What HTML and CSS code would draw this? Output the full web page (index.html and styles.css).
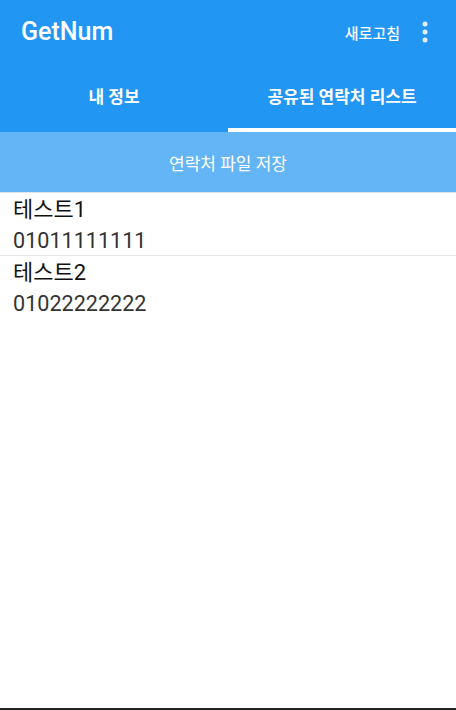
FILE: index.html
```html
<!DOCTYPE html>
<html lang="ko">
<head>
<meta charset="utf-8">
<title>GetNum</title>
<link rel="stylesheet" href="styles.css">
</head>
<body>
<div class="app">
  <header class="appbar">
    <div class="toolbar">
      <div class="title">GetNum</div>
      <div class="actions">
        <span class="action">새로고침</span>
        <svg class="more" width="6" height="22" viewBox="0 0 6 22"><circle cx="3" cy="3" r="2.5" fill="#e3effc"/><circle cx="3" cy="11" r="2.5" fill="#e3effc"/><circle cx="3" cy="19" r="2.5" fill="#e3effc"/></svg>
      </div>
    </div>
    <nav class="tabs">
      <div class="tab">내 정보</div>
      <div class="tab active">공유된 연락처 리스트</div>
    </nav>
  </header>
  <button class="save">연락처 파일 저장</button>
  <ul class="list">
    <li class="item"><div class="name">테스트1</div><div class="phone">01011111111</div></li>
    <li class="item"><div class="name">테스트2</div><div class="phone">01022222222</div></li>
  </ul>
  <div class="spacer"></div>
  <div class="bottom"></div>
</div>
</body>
</html>
```
FILE: styles.css
```css
* { box-sizing: border-box; }
html, body { margin: 0; padding: 0; height: 100%; }
body { font-family: Roboto, "Noto Sans CJK KR", sans-serif; background: #fff; }
.app { display: flex; flex-direction: column; height: 710px; }
.appbar { background: #2196f3; color: #fff; }
.toolbar { height: 64px; display: flex; align-items: center; justify-content: space-between; padding: 0 28px 0 21px; }
.title { font-size: 25px; font-weight: 500; padding-bottom: 1px; }
.actions { display: flex; align-items: center; gap: 22px; }
.action { font-size: 15px; font-weight: 500; }
.more { display: block; }
.tabs { display: flex; height: 68px; }
.tab { flex: 1; display: flex; align-items: center; justify-content: center; font-size: 17px; font-weight: 700; padding-bottom: 2px; border-bottom: 4px solid transparent; }
.tab.active { border-bottom-color: #fff; }
.save { display: block; width: 100%; height: 61px; border: 0; margin: 0; background: #64b5f6; color: #fff; font-family: inherit; font-size: 17px; border-bottom: 1px solid #dfe6ec; }
.list { list-style: none; margin: 0; padding: 0; }
.item { padding: 2px 13px 0; height: 63px; border-bottom: 1px solid #e6e6e6; }
.item:last-child { border-bottom: 0; }
.name { font-size: 22px; color: #111; line-height: 30px; }
.phone { font-size: 21.6px; color: #333; line-height: 32px; }
.spacer { flex: 1; }
.bottom { height: 2px; background: #222; }
```
